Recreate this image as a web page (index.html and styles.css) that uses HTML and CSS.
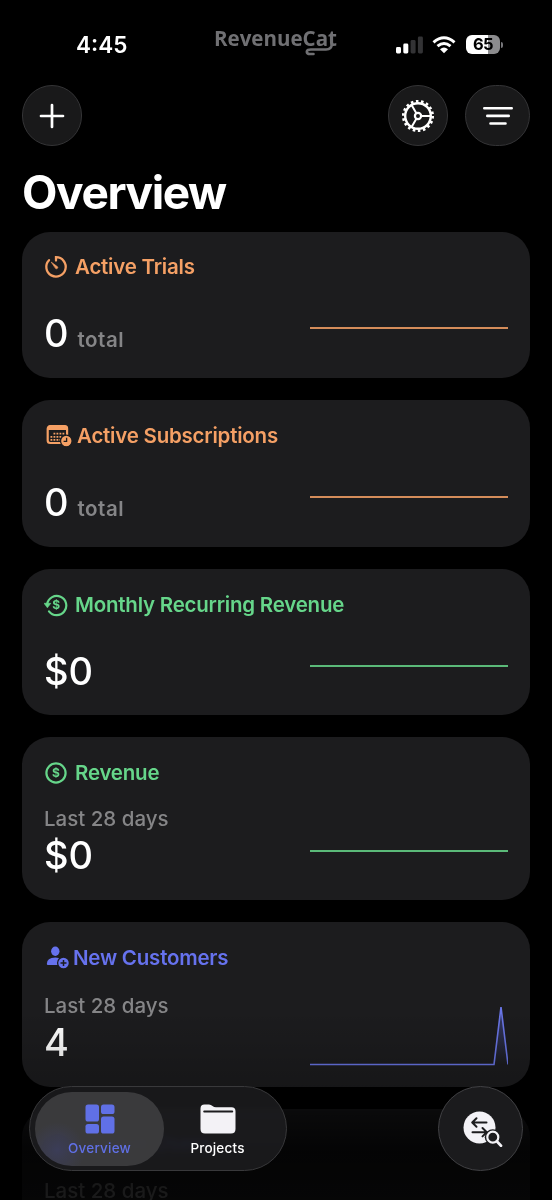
FILE: index.html
```html
<!DOCTYPE html>
<html lang="en">
<head>
    <meta charset="UTF-8">
    <meta name="viewport" content="width=device-width, initial-scale=1.0">
    <title>RevenueCat - Overview</title>
    <link rel="stylesheet" href="styles.css">
</head>
<body>
    <div class="screen">
        <div class="status-bar">
            <span class="time">4:45</span>
            <svg class="wordmark" width="126" height="34" viewBox="0 0 126 34">
                <text x="0" y="20" textLength="123" lengthAdjust="spacingAndGlyphs">RevenueCat</text>
                <path d="M117.800 11V17.500Q117.800 23.500 112 23.500H97.500Q92.800 23.300 92.800 25.800Q93 28 96 28H99.500"/>
            </svg>
            <div class="status-icons">
                <svg width="27" height="18" viewBox="0 0 27 18">
                    <rect x="0" y="11" width="5" height="6.500" rx="1.400" fill="#fff"/>
                    <rect x="7.300" y="7.500" width="5" height="10" rx="1.400" fill="#fff"/>
                    <rect x="14.600" y="4" width="5" height="13.500" rx="1.400" fill="#333335"/>
                    <rect x="21.900" y="0.500" width="5" height="17" rx="1.400" fill="#333335"/>
                </svg>
                <svg class="wifi" width="24" height="18" viewBox="0 0 24 18">
                    <path d="M1.500 6.300Q12 -2.700 22.500 6.300M5.500 10.200Q12 4.700 18.500 10.200" fill="none" stroke="#fff" stroke-width="3"/>
                    <path d="M8 13.200Q12 9.700 16 13.200L12 17.200Z" fill="#fff"/>
                </svg>
                <div class="battery"><span>65</span></div>
                <div class="battery-tip"></div>
            </div>
        </div>

        <div class="toolbar">
            <button class="round-btn" aria-label="Add">
                <svg width="26" height="26" viewBox="0 0 26 26" stroke="#fff" stroke-width="2.700" stroke-linecap="round">
                    <path d="M13 2V24M2 13H24"/>
                </svg>
            </button>
            <button class="round-btn settings" aria-label="Settings">
                <svg width="34" height="34" viewBox="0 0 34 34" fill="none" stroke="#fff">
                    <circle cx="17" cy="17" r="14.700" stroke-width="2.700" stroke-dasharray="2.566 2.566"/>
                    <circle cx="17" cy="17" r="12.800" stroke-width="2.400"/>
                    <circle cx="17" cy="17" r="3.100" stroke-width="2.200"/>
                    <path d="M20 17H29.500M15.500 14.400L10.700 6.200M15.500 19.600L10.700 27.800" stroke-width="2"/>
                </svg>
            </button>
            <button class="round-btn wide" aria-label="Filter">
                <svg width="32" height="20" viewBox="0 0 32 20" stroke="#fff" stroke-width="2.600" stroke-linecap="round">
                    <path d="M2.300 2.300H29.700M5.300 9.900H26.700M8.500 17.500H23.500"/>
                </svg>
            </button>
        </div>

        <h1>Overview</h1>

        <div class="cards">
            <div class="card orange trials">
                <div class="card-title">
                    <svg width="24" height="24" viewBox="0 0 24 24" fill="none" stroke="currentColor" stroke-width="2.300" stroke-linecap="round">
                        <path d="M12 5.500V2.200A9.700 9.700 0 1 1 5 5.200"/>
                        <path d="M7.500 7.300L13.500 11.700A1.300 1.300 0 0 1 11.800 13.600Z" fill="currentColor" stroke-width="0.600"/>
                    </svg>
                    <h2>Active Trials</h2>
                </div>
                <div class="card-body">
                    <p class="value">0<span>total</span></p>
                    <div class="flat-line"></div>
                </div>
            </div>

            <div class="card orange subs">
                <div class="card-title">
                    <svg width="28" height="24" viewBox="0 0 28 24">
                        <rect x="3.700" y="2.200" width="19.400" height="16.800" rx="2.500" fill="none" stroke="currentColor" stroke-width="2.200"/>
                        <path d="M3 5.500Q3 1.500 6 1.500H21Q24 1.500 24 5.500V6H3Z" fill="currentColor"/>
                        <path d="M9.500 9.700H20.800M6.500 12.800H20.800M6.500 15.900H17" stroke="currentColor" stroke-width="1.800" stroke-dasharray="1.800 1.200"/>
                        <circle cx="22.300" cy="17" r="5.800" fill="currentColor" stroke="#1c1c1e" stroke-width="1.300"/>
                        <path d="M22.600 13.700V17.300H19.600" fill="none" stroke="#1c1c1e" stroke-width="1.300"/>
                    </svg>
                    <h2>Active Subscriptions</h2>
                </div>
                <div class="card-body">
                    <p class="value">0<span>total</span></p>
                    <div class="flat-line"></div>
                </div>
            </div>

            <div class="card green mrr">
                <div class="card-title">
                    <svg width="24" height="24" viewBox="0 0 24 24">
                        <path d="M3.200 11A9.600 9.600 0 1 1 5 18.300" fill="none" stroke="currentColor" stroke-width="2.200" stroke-linecap="round"/>
                        <path d="M0 10.300H6.800L3.400 14.800Z" fill="currentColor" stroke="currentColor" stroke-width="0.600" stroke-linejoin="round"/>
                        <text class="dollar" x="12.200" y="16.200">$</text>
                    </svg>
                    <h2>Monthly Recurring Revenue</h2>
                </div>
                <div class="card-body">
                    <p class="value">$0</p>
                    <div class="flat-line"></div>
                </div>
            </div>

            <div class="card green revenue">
                <div class="card-title">
                    <svg width="24" height="24" viewBox="0 0 24 24">
                        <circle cx="12" cy="12" r="9.600" fill="none" stroke="currentColor" stroke-width="2.200"/>
                        <text class="dollar" x="12" y="16.200">$</text>
                    </svg>
                    <h2>Revenue</h2>
                </div>
                <p class="period">Last 28 days</p>
                <div class="card-body">
                    <p class="value">$0</p>
                    <div class="flat-line"></div>
                </div>
            </div>

            <div class="card blue customers">
                <div class="card-title">
                    <svg width="25" height="24" viewBox="0 0 25 24">
                        <ellipse cx="11.300" cy="5.200" rx="4.200" ry="4.700" fill="currentColor"/>
                        <path d="M2.800 18Q2.800 11.500 11.300 11.500Q19 11.500 19.800 18Q19.800 19 18.500 19H4Q2.800 19 2.800 18Z" fill="currentColor"/>
                        <circle cx="19.500" cy="17" r="5.900" fill="currentColor" stroke="#1c1c1e" stroke-width="1.300"/>
                        <path d="M19.500 14V20M16.500 17H22.500" stroke="#1c1c1e" stroke-width="1.500"/>
                    </svg>
                    <h2>New Customers</h2>
                </div>
                <p class="period">Last 28 days</p>
                <div class="card-body">
                    <p class="value">4</p>
                    <svg class="spark" width="198" height="62" viewBox="0 0 198 62">
                        <defs>
                            <linearGradient id="sparkFill" x1="0" y1="0" x2="0" y2="1">
                                <stop offset="0" stop-color="#5b68dc" stop-opacity="0.450"/>
                                <stop offset="1" stop-color="#5b68dc" stop-opacity="0"/>
                            </linearGradient>
                        </defs>
                        <path d="M184 60.500L191 3L198 60.500Z" fill="url(#sparkFill)"/>
                        <path d="M0 60.500H184L191 3L198 60.500" fill="none" stroke="#6975e6" stroke-width="1.600"/>
                    </svg>
                </div>
            </div>

            <div class="card blue users">
                <div class="card-title">
                    <svg width="36" height="24" viewBox="0 0 36 24" fill="currentColor">
                        <circle cx="17" cy="6" r="5"/>
                        <path d="M4 22Q4 12.500 17 12.500Q30 12.500 30 22Z"/>
                    </svg>
                    <h2>Active Users</h2>
                </div>
                <p class="period">Last 28 days</p>
            </div>
        </div>

        <div class="bottom-fade"></div>

        <div class="bottom-bar">
            <nav class="tabs">
                <a class="tab active">
                    <svg width="30" height="30" viewBox="0 0 30 30" fill="currentColor">
                        <rect x="0.500" y="0.500" width="13.500" height="17" rx="2.600"/>
                        <rect x="16" y="0.500" width="13.500" height="9.500" rx="2.600"/>
                        <rect x="0.500" y="20" width="13.500" height="9.500" rx="2.600"/>
                        <rect x="16" y="12.500" width="13.500" height="17" rx="2.600"/>
                    </svg>
                    <span>Overview</span>
                </a>
                <a class="tab">
                    <svg width="36" height="30" viewBox="0 0 36 30">
                        <path d="M0.500 4.500Q0.500 0.500 4.500 0.500H9Q11 0.500 12.500 2Q14 3.300 16 3.300H31.500Q35.500 3.300 35.500 7.300V25Q35.500 29.500 31 29.500H5Q0.500 29.500 0.500 25Z" fill="#f3f2f6"/>
                        <path d="M4.200 7.600H32.200" stroke="#1c1c1e" stroke-width="2" stroke-linecap="round"/>
                    </svg>
                    <span>Projects</span>
                </a>
            </nav>
            <button class="search-btn" aria-label="Search transactions">
                <svg width="40" height="36" viewBox="0 0 40 36" fill="none" stroke-linecap="round" stroke-linejoin="round">
                    <circle cx="16.500" cy="16.500" r="16" fill="#f3f2f6"/>
                    <path d="M23.500 11.500H9.500M13.500 7.300L9.200 11.500L13.500 15.700M9.500 21.200H23M19.500 17L23.800 21.200L19.500 25.400" stroke="#1c1c1e" stroke-width="2"/>
                    <circle cx="29.800" cy="26.200" r="8" fill="#1c1c1e"/>
                    <circle cx="29.800" cy="26.200" r="5.500" stroke="#f3f2f6" stroke-width="2.200"/>
                    <path d="M34 30.500L38 34.700" stroke="#f3f2f6" stroke-width="2.700"/>
                </svg>
            </button>
        </div>
    </div>
</body>
</html>
```
FILE: styles.css
```css
/* General Styling */
* {
    box-sizing: border-box;
}

body {
    margin: 0;
    background: #000;
    color: #fff;
    font-family: Inter, "Liberation Sans", sans-serif;
}

h1, h2, p {
    margin: 0;
}

svg {
    display: block;
    flex-shrink: 0;
}

button {
    padding: 0;
    color: #fff;
}

.screen {
    position: relative;
    width: 552px;
    height: 1200px;
    overflow: hidden;
    padding: 0 22px;
}

/* Status bar */
.status-bar {
    display: flex;
    align-items: flex-start;
    height: 85px;
    padding: 28px 0 0 54px;
}

.time {
    width: 138px;
    padding-top: 5px;
    font-size: 22.5px;
    line-height: 24px;
    font-weight: 600;
}

.wordmark {
    margin-top: -2px;
    overflow: visible;
}

.wordmark text {
    font-family: "Open Sans", sans-serif;
    font-size: 22px;
    font-weight: 700;
    fill: #707073;
}

.wordmark path {
    fill: none;
    stroke: #707073;
    stroke-width: 2.6;
    stroke-linecap: round;
}

.status-icons {
    display: flex;
    align-items: center;
    margin: 7px 0 0 56px;
    height: 19px;
}

.wifi {
    margin-left: 9px;
}

.battery {
    width: 34px;
    height: 19px;
    margin-left: 10px;
    border-radius: 6px;
    background: linear-gradient(to right, #fff 66%, #8c8c8e 66%);
    color: #000;
    font-size: 16.5px;
    line-height: 19px;
    font-weight: 700;
    letter-spacing: -0.6px;
    text-align: center;
}

.battery-tip {
    width: 2px;
    height: 6px;
    margin-left: 1px;
    border-radius: 0 3px 3px 0;
    background: #77777a;
}

/* Toolbar */
.toolbar {
    display: flex;
    gap: 17px;
    height: 61px;
}

.round-btn {
    display: flex;
    align-items: center;
    justify-content: center;
    width: 60px;
    height: 61px;
    border: 1px solid #343436;
    border-radius: 31px;
    background: #19191a;
}

.round-btn.settings {
    margin-left: auto;
}

.round-btn.wide {
    width: 65px;
}

h1 {
    height: 86px;
    padding-top: 18px;
    font-size: 46px;
    line-height: 56px;
    font-weight: 700;
    letter-spacing: -1.4px;
}

/* Cards */
.cards {
    display: flex;
    flex-direction: column;
    gap: 22px;
}

.card {
    flex-shrink: 0;
    height: 146px;
    padding: 23px 22px 0;
    border-radius: 28px;
    background: #1c1c1e;
}

.subs {
    height: 147px;
}

.revenue {
    height: 163px;
}

.customers {
    height: 165px;
}

.orange {
    color: #f5a065;
}

.green {
    color: #66d68a;
}

.blue {
    color: #6672ee;
}

.card-title {
    display: flex;
    align-items: center;
    gap: 7px;
    height: 24px;
}

.subs .card-title {
    gap: 5px;
    height: 25px;
}

.mrr .card-title,
.revenue .card-title {
    height: 25px;
}

.customers .card-title {
    gap: 4px;
    height: 26px;
}

.card h2 {
    font-size: 20.5px;
    line-height: 24px;
    font-weight: 600;
    letter-spacing: -0.22px;
    white-space: nowrap;
}

.dollar {
    font-size: 12px;
    font-weight: 700;
    text-anchor: middle;
    fill: currentColor;
}

.card-body {
    display: flex;
    justify-content: space-between;
    height: 46px;
    margin-top: 31px;
}

.period {
    margin-top: 22px;
    color: #858587;
    font-size: 20.5px;
    line-height: 26px;
    font-weight: 500;
}

.revenue .period {
    margin-top: 21px;
}

.period + .card-body {
    margin-top: 0;
}

.value {
    color: #fff;
    font-size: 38px;
    line-height: 46px;
    font-weight: 500;
}

.value span {
    margin-left: 9px;
    color: #858587;
    font-size: 20.5px;
    font-weight: 600;
    letter-spacing: 0.5px;
}

.flat-line {
    width: 198px;
    height: 2px;
    margin-top: 17px;
    background: currentColor;
    opacity: 0.85;
}

.revenue .flat-line {
    margin-top: 18px;
}

.spark {
    margin-top: -15px;
}

/* Bottom tab bar */
.bottom-fade {
    position: absolute;
    left: 0;
    right: 0;
    bottom: 0;
    height: 190px;
    background: linear-gradient(to bottom, rgba(0, 0, 0, 0) 0%, rgba(0, 0, 0, 0.2) 40%, rgba(0, 0, 0, 0.65) 54%, rgba(0, 0, 0, 0.85) 75%, rgba(0, 0, 0, 0.8) 100%);
}

.bottom-bar {
    position: absolute;
    left: 29px;
    right: 29px;
    bottom: 29px;
    display: flex;
    justify-content: space-between;
}

.tabs {
    display: flex;
    width: 258px;
    height: 85px;
    padding: 5px;
    border: 1px solid #39393b;
    border-radius: 43px;
    background: rgba(30, 30, 32, 0.8);
    backdrop-filter: blur(3px) brightness(1.6);
}

.tab {
    display: flex;
    flex-direction: column;
    align-items: center;
    width: 129px;
    height: 74px;
    padding-top: 12px;
    border-radius: 37px;
    font-size: 13.5px;
    line-height: 18px;
    font-weight: 500;
    letter-spacing: 0.2px;
}

.tab span {
    margin-top: 5px;
}

.tab + .tab {
    width: 107px;
}

.tab.active {
    background: radial-gradient(circle at 22px 58px, rgba(60, 64, 120, 0.45), transparent 28px), rgba(65, 65, 67, 0.85);
    color: #6070e6;
}

.search-btn {
    display: flex;
    align-items: center;
    justify-content: center;
    width: 85px;
    height: 85px;
    padding-left: 5px;
    border: 1px solid #414144;
    border-radius: 50%;
    background: #1b1b1d;
}
```
